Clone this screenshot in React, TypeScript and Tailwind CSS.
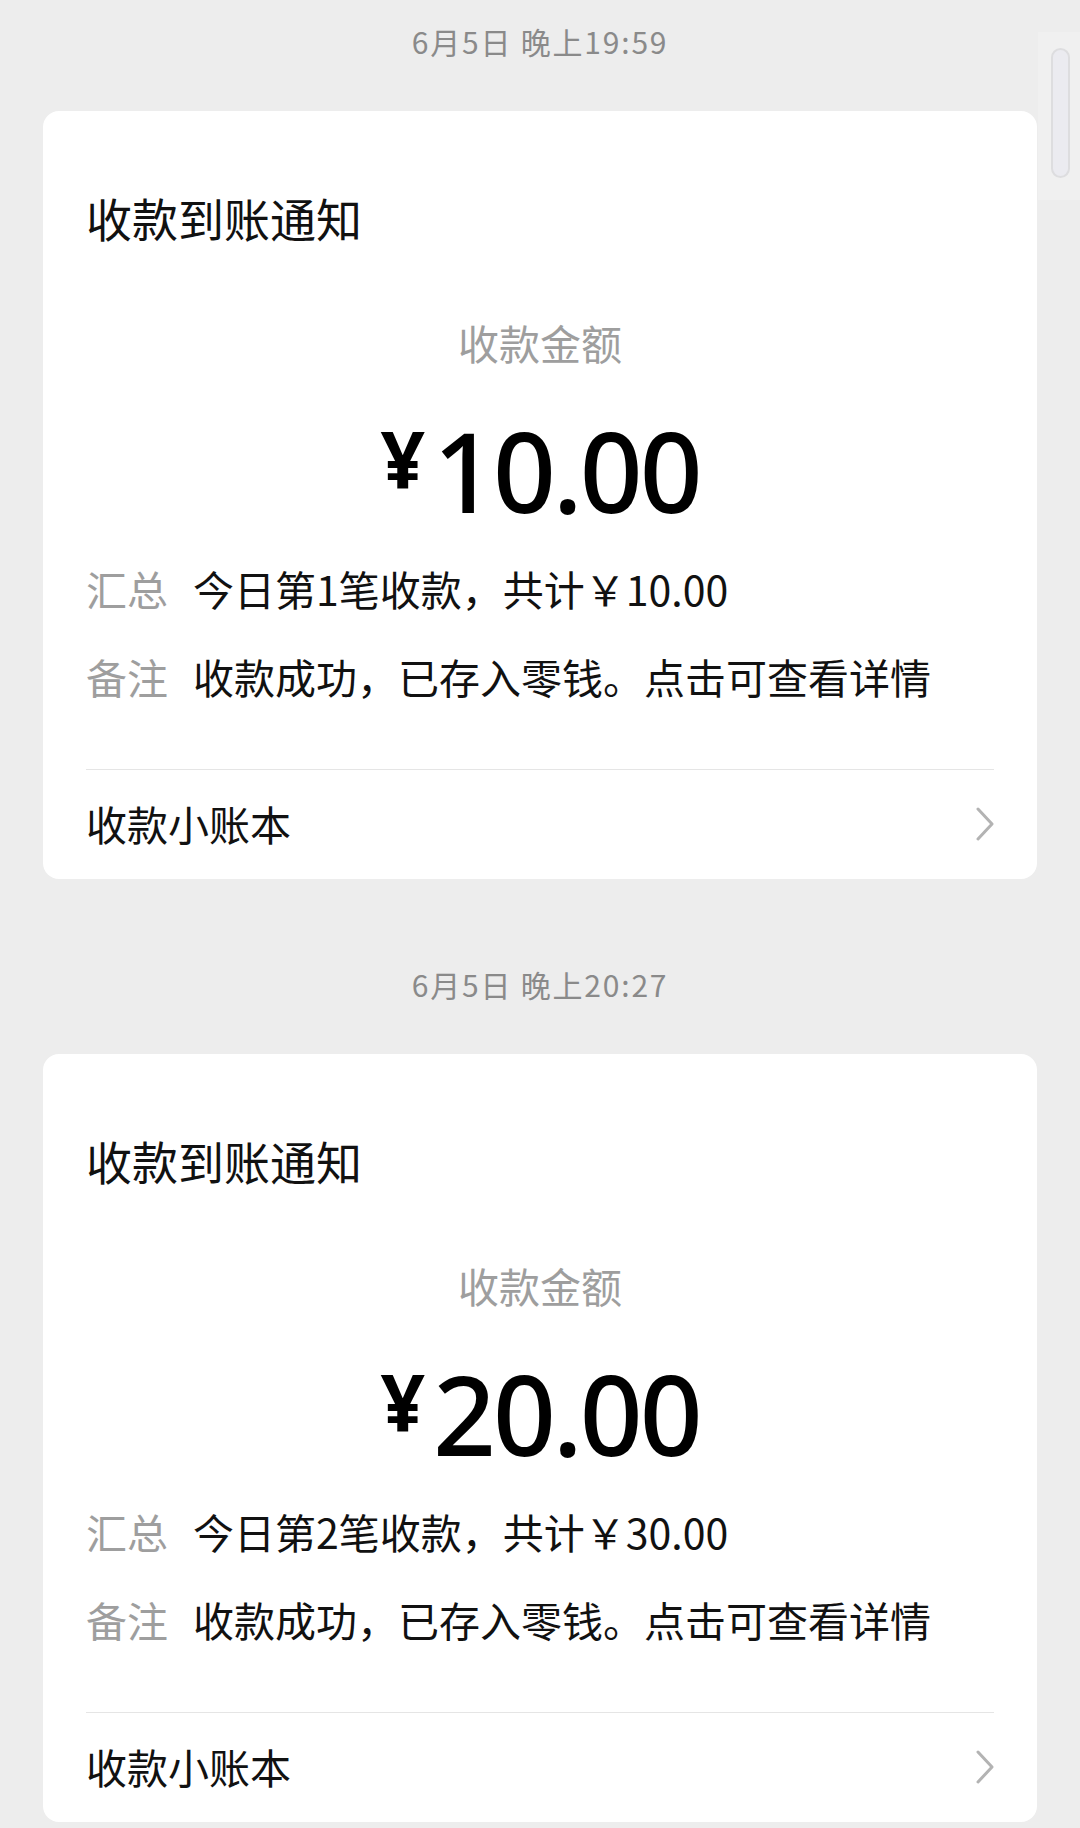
import React from "react";

interface Receipt {
  time: string;
  amount: string;
  index: number;
  total: string;
}

const receipts: Receipt[] = [
  { time: "6月5日 晚上19:59", amount: "10.00", index: 1, total: "10.00" },
  { time: "6月5日 晚上20:27", amount: "20.00", index: 2, total: "30.00" },
];

const Chevron = () => (
  <svg width="18" height="34" viewBox="0 0 18 34" fill="none">
    <path
      d="M2 2 L16 17 L2 32"
      stroke="#b3b3b3"
      strokeWidth="3"
      strokeLinecap="round"
      strokeLinejoin="round"
    />
  </svg>
);

const ReceiptCard: React.FC<{ item: Receipt; first: boolean }> = ({ item, first }) => {
  return (
    <div className={first ? "pt-[21px]" : "pt-[85px]"}>
      <div className="flex h-[40px] items-center justify-center text-[30px] leading-none tracking-[1.8px] text-[#8a8a8a]">
        {item.time}
      </div>
      <div className="mx-[43px] mt-[50px] rounded-[16px] bg-white px-[43px] pt-[76px]">
        <div className="flex h-[60px] items-center text-[46px] leading-none text-[#111]">
          收款到账通知
        </div>
        <div className="mt-[65px] flex h-[60px] items-center justify-center text-[41px] leading-none text-[#9e9e9e]">
          收款金额
        </div>
        <div className="mt-[43px] flex h-[110px] items-start justify-center leading-none text-black font-['Noto_Sans',sans-serif]">
          <span className="mt-[5px] text-[78px] font-bold">¥</span>
          <span className="ml-[8px] text-[110px] font-medium tracking-[-3px]">{item.amount}</span>
        </div>
        <div className="mt-[33px] flex h-[60px] items-center gap-[25px] text-[41px] leading-none">
          <span className="text-[#9e9e9e]">汇总</span>
          <span className="text-[#111]">
            今日第{item.index}笔收款，共计￥{item.total}
          </span>
        </div>
        <div className="mt-[28px] flex h-[60px] items-center gap-[25px] text-[41px] leading-none">
          <span className="text-[#9e9e9e]">备注</span>
          <span className="text-[#111]">收款成功，已存入零钱。点击可查看详情</span>
        </div>
        <div className="mt-[63px] h-px bg-[#e5e5e5]" />
        <div className="flex h-[109px] items-center justify-between pb-[2px]">
          <span className="text-[41px] leading-none text-[#111]">收款小账本</span>
          <Chevron />
        </div>
      </div>
    </div>
  );
};

export default function App() {
  return (
    <div className="relative h-[1828px] w-[1080px] overflow-hidden bg-[#ededed] font-['Noto_Sans_CJK_SC',sans-serif]">
      {receipts.map((r, i) => (
        <ReceiptCard key={r.time} item={r} first={i === 0} />
      ))}
      {/* scroll indicator */}
      <div className="absolute left-[1038px] top-[32px] h-[168px] w-[42px] bg-[#f0f0f0]" />
      <div className="absolute left-[1051px] top-[48px] h-[130px] w-[19px] rounded-full border-2 border-[#dddddf] bg-[#ebebf0]" />
    </div>
  );
}
